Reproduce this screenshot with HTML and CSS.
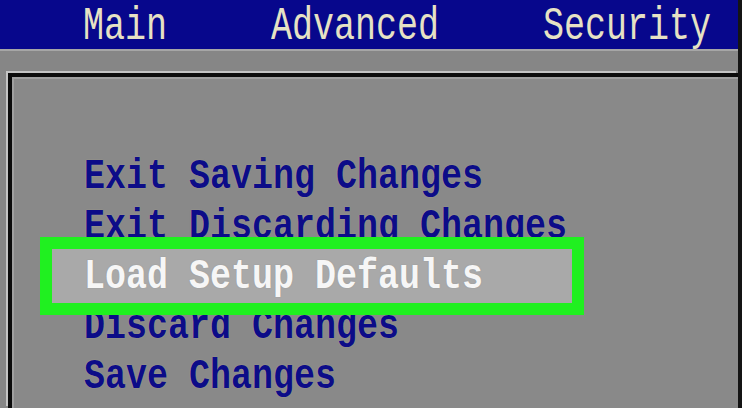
FILE: index.html
```html
<!DOCTYPE html>
<html lang="en">
<head>
<meta charset="utf-8">
<title>BIOS Setup - Exit</title>
<link rel="stylesheet" href="styles.css">
</head>
<body>
<div class="screen">
  <nav class="topbar">
    <span class="tab">Main</span>
    <span class="tab">Advanced</span>
    <span class="tab">Security</span>
  </nav>
  <section class="panel">
    <ul class="menu">
      <li class="item"><span class="label">Exit Saving Changes</span></li>
      <li class="item"><span class="label">Exit Discarding Changes</span></li>
      <li class="item selected"><span class="label">Load Setup Defaults</span></li>
      <li class="item"><span class="label">Discard Changes</span></li>
      <li class="item"><span class="label">Save Changes</span></li>
    </ul>
  </section>
</div>
</body>
</html>
```
FILE: styles.css
```css
html, body {
  margin: 0;
  padding: 0;
}
body {
  width: 742px;
  height: 408px;
  overflow: hidden;
  background: #868686;
  font-family: "Liberation Mono", "DejaVu Sans Mono", monospace;
}
.screen {
  height: 408px;
  box-sizing: border-box;
  border-right: 4px solid #141414;
  display: flex;
  flex-direction: column;
}
.topbar {
  height: 51px;
  box-sizing: border-box;
  background: #07078c;
  border-bottom: 2px solid #a6a6a6;
  display: flex;
  align-items: flex-start;
  gap: 104px;
  padding: 10px 0 0 83px;
}
.tab {
  display: block;
  color: #e6e2c4;
  font-size: 35px;
  line-height: 40px;
  transform: scaleY(1.3);
  transform-origin: 0 29px;
}
.panel {
  flex: 1;
  margin: 22px 0 0 8px;
  background: #898989;
  border-top: 4px solid #0c0c0c;
  border-left: 4px solid #0c0c0c;
  box-shadow: -2px -2px 0 #c4c4c4, inset 2px 2px 0 #a0a0a0;
}
.menu {
  list-style: none;
  margin: 0;
  padding: 77px 0 0 72px;
}
.item {
  height: 50px;
  position: relative;
}
.label {
  display: block;
  font-size: 35px;
  font-weight: bold;
  line-height: 50px;
  color: #0c0c88;
  text-shadow: 0 0 1px rgba(214, 204, 150, 0.7);
  transform: scaleY(1.22);
  transform-origin: 0 34px;
  white-space: pre;
}
.selected {
  z-index: 1;
}
.selected::before {
  content: "";
  position: absolute;
  left: -44px;
  top: -17px;
  width: 544px;
  height: 78px;
  box-sizing: border-box;
  border: 12px solid #20f020;
  background: #a9a9a9;
  z-index: -1;
}
.selected .label {
  color: #f6f6f6;
  text-shadow: 0 0 1px rgba(120, 120, 120, 0.6);
}
```
